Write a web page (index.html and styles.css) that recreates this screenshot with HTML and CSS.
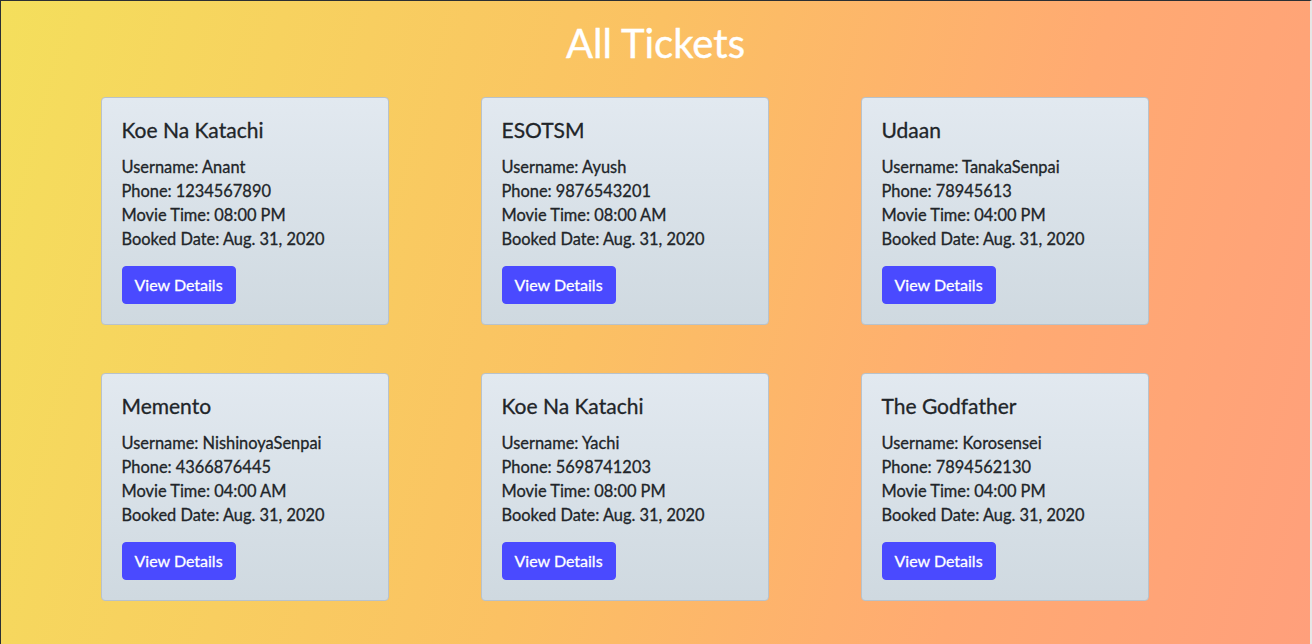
FILE: index.html
```html
<!DOCTYPE html>
<html>
<head>
<meta charset="utf-8">
<title>All Tickets</title>
<link rel="stylesheet" href="styles.css">
</head>
<body>
<h1 class="page-title">All Tickets</h1>
<div class="container">
  <div class="grid">
    <div class="card">
      <h5 class="card-title">Koe Na Katachi</h5>
      <div class="card-text">
        <div>Username: Anant</div>
        <div>Phone: 1234567890</div>
        <div>Movie Time: 08:00 PM</div>
        <div>Booked Date: Aug. 31, 2020</div>
      </div>
      <a class="btn">View Details</a>
    </div>
    <div class="card">
      <h5 class="card-title">ESOTSM</h5>
      <div class="card-text">
        <div>Username: Ayush</div>
        <div>Phone: 9876543201</div>
        <div>Movie Time: 08:00 AM</div>
        <div>Booked Date: Aug. 31, 2020</div>
      </div>
      <a class="btn">View Details</a>
    </div>
    <div class="card">
      <h5 class="card-title">Udaan</h5>
      <div class="card-text">
        <div>Username: TanakaSenpai</div>
        <div>Phone: 78945613</div>
        <div>Movie Time: 04:00 PM</div>
        <div>Booked Date: Aug. 31, 2020</div>
      </div>
      <a class="btn">View Details</a>
    </div>
    <div class="card">
      <h5 class="card-title">Memento</h5>
      <div class="card-text">
        <div>Username: NishinoyaSenpai</div>
        <div>Phone: 4366876445</div>
        <div>Movie Time: 04:00 AM</div>
        <div>Booked Date: Aug. 31, 2020</div>
      </div>
      <a class="btn">View Details</a>
    </div>
    <div class="card">
      <h5 class="card-title">Koe Na Katachi</h5>
      <div class="card-text">
        <div>Username: Yachi</div>
        <div>Phone: 5698741203</div>
        <div>Movie Time: 08:00 PM</div>
        <div>Booked Date: Aug. 31, 2020</div>
      </div>
      <a class="btn">View Details</a>
    </div>
    <div class="card">
      <h5 class="card-title">The Godfather</h5>
      <div class="card-text">
        <div>Username: Korosensei</div>
        <div>Phone: 7894562130</div>
        <div>Movie Time: 04:00 PM</div>
        <div>Booked Date: Aug. 31, 2020</div>
      </div>
      <a class="btn">View Details</a>
    </div>
  </div>
</div>
</body>
</html>
```

FILE: styles.css
```css
html, body {
  margin: 0;
  padding: 0;
}
html {
  height: 100%;
  overflow: hidden;
}
body {
  min-height: 100%;
  box-sizing: border-box;
  border-top: 1px solid #2b2f33;
  border-left: 1px solid #2b2f33;
  border-right: 2px solid #e6e6e6;
  background: linear-gradient(105deg, #f4df5c 0%, #fbc163 45%, #ffaa72 75%, #ff9f7b 100%);
  font-family: "Lato", "Noto Sans", sans-serif;
  color: #212529;
  font-size: 16.4px;
  line-height: 1.5;
}
.page-title {
  margin: 16px 0 28px;
  text-align: center;
  color: #ffffff;
  font-size: 40px;
  font-weight: 400;
  line-height: 52px;
  -webkit-text-stroke: 0.4px #ffffff;
}
.container {
  width: 1140px;
  margin: 0 auto;
}
.grid {
  display: grid;
  grid-template-columns: repeat(3, 380px);
}
.card {
  width: 288px;
  margin: 0 15px 48px;
  box-sizing: border-box;
  padding: 19px 20px 20px;
  border: 1px solid #b8c2cb;
  border-radius: 4px;
  background: linear-gradient(180deg, #e2e9f0 0%, #cfd9e0 100%);
}
.card-title {
  margin: 0 0 12px;
  font-size: 21px;
  font-weight: 400;
  line-height: 26px;
  -webkit-text-stroke: 0.3px #212529;
}
.card-text {
  line-height: 24px;
  -webkit-text-stroke: 0.3px #212529;
}
.btn {
  display: inline-block;
  margin-top: 15px;
  padding: 6px 12px;
  border: 1px solid #4a4aff;
  border-radius: 4px;
  background: #4a4aff;
  color: #ffffff;
  line-height: 24px;
  font-size: 16px;
  -webkit-text-stroke: 0.3px #ffffff;
}
```
